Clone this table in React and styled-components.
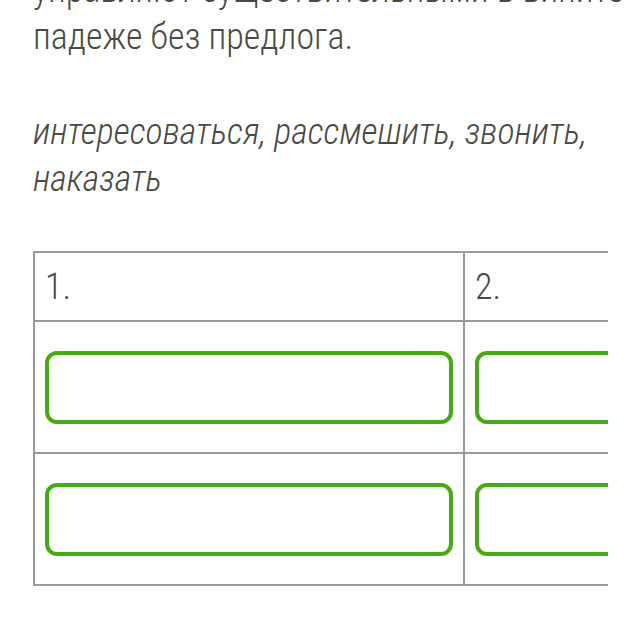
import React from "react";
import styled, { createGlobalStyle } from "styled-components";

const Global = createGlobalStyle`
  html, body {
    margin: 0;
    padding: 0;
    background: #ffffff;
  }
  body {
    font-family: "Roboto Condensed", Roboto, "Liberation Sans", sans-serif;
    font-weight: 300;
    color: #4a4a42;
  }
`;

const Page = styled.div`
  width: 640px;
  height: 640px;
  overflow: hidden;
  padding-left: 33px;
  box-sizing: border-box;
`;

const Text = styled.p`
  margin: -33px 0 0;
  font-size: 36px;
  line-height: 47px;
  width: 590px;
  white-space: nowrap;
  overflow: hidden;
`;

const Words = styled.p`
  margin: 48px 0 0;
  font-size: 36px;
  line-height: 47px;
  font-style: italic;
  width: 570px;
`;

const Scroller = styled.div`
  margin-top: 48px;
  width: 575px;
  overflow: hidden;
`;

const Table = styled.table`
  border-collapse: collapse;
  table-layout: fixed;
  width: 862px;
`;

const Cell = styled.td`
  border: 2px solid #9a9a9a;
  padding: 0 10px;
  height: ${(p) => (p.$head ? "67px" : "130px")};
  font-size: 36px;
  vertical-align: middle;
`;

const Field = styled.div`
  height: 65px;
  border: 4px solid #48a816;
  border-radius: 12px;
  box-shadow: inset 0 2px 3px rgba(0, 0, 0, 0.08);
`;

const rows = [0, 1];

export default function App() {
  return (
    <Page>
      <Global />
      <Text>
        управляют существительными в винительном или
        <br />
        падеже без предлога.
      </Text>
      <Words>интересоваться, рассмешить, звонить, наказать</Words>
      <Scroller>
        <Table>
          <tbody>
            <tr>
              <Cell $head>1.</Cell>
              <Cell $head>2.</Cell>
            </tr>
            {rows.map((r) => (
              <tr key={r}>
                <Cell>
                  <Field />
                </Cell>
                <Cell>
                  <Field />
                </Cell>
              </tr>
            ))}
          </tbody>
        </Table>
      </Scroller>
    </Page>
  );
}
